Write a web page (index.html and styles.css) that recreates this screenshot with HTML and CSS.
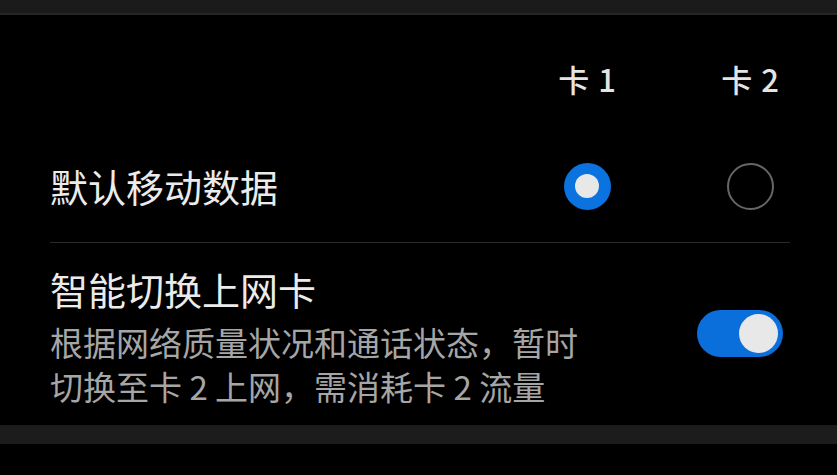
FILE: index.html
```html
<!DOCTYPE html>
<html lang="zh-CN">
  <head>
    <meta charset="utf-8">
    <title>双卡管理</title>
    <link rel="stylesheet" href="styles.css">
  </head>
  <body>
    <div class="topbar"></div>

    <div class="card">
      <div class="row head">
        <span></span>
        <span class="col">卡 1</span>
        <span class="col">卡 2</span>
      </div>

      <div class="row data">
        <span class="title">默认移动数据</span>
        <span class="col"><span class="radio on"></span></span>
        <span class="col"><span class="radio"></span></span>
      </div>

      <div class="switch-row">
        <div class="text">
          <div class="title">智能切换上网卡</div>
          <div class="summary">根据网络质量状况和通话状态，暂时切换至卡 2 上网，需消耗卡 2 流量</div>
        </div>
        <span class="toggle on"><span class="knob"></span></span>
      </div>
    </div>

    <div class="gap"></div>
  </body>
</html>
```

FILE: styles.css
```css
* {
  box-sizing: border-box;
}
body {
  margin: 0;
  background-color: #000;
  font-family: "Noto Sans CJK SC", "Noto Sans", sans-serif;
  color: #e8e8e8;
}
.topbar {
  height: 15px;
  background-color: #1b1b1b;
  border-bottom: 2px solid #262626;
}
.card {
  padding: 0 47px 0 50px;
}
.row {
  display: grid;
  grid-template-columns: 1fr 80px 80px;
  column-gap: 83px;
  align-items: center;
}
.col {
  display: flex;
  justify-content: center;
}
.head {
  padding: 44px 0 31px;
  font-size: 31px;
  line-height: 40px;
  font-weight: 500;
  word-spacing: 2px;
  color: #e4e4e4;
}
.data {
  height: 113px;
  border-bottom: 1px solid #2a2a2a;
}
.title {
  font-size: 38px;
  line-height: 46px;
  color: #ebebeb;
}
.radio {
  width: 47px;
  height: 47px;
  border-radius: 50%;
  border: 2px solid #666;
}
.radio.on {
  border: none;
  background-color: #0b73e0;
  display: flex;
  align-items: center;
  justify-content: center;
}
.radio.on::after {
  content: "";
  width: 24px;
  height: 24px;
  border-radius: 50%;
  background-color: #e8e8e8;
}
.switch-row {
  display: flex;
  align-items: center;
  justify-content: space-between;
  padding: 23px 7px 17px 0;
}
.summary {
  max-width: 540px;
  margin-top: 8px;
  font-size: 33px;
  line-height: 44px;
  color: #a6a6a6;
}
.toggle {
  width: 86px;
  height: 47px;
  border-radius: 24px;
  background-color: #0b6fdb;
  display: flex;
  align-items: center;
  justify-content: flex-end;
  padding-right: 5px;
  margin-bottom: 8px;
}
.knob {
  width: 39px;
  height: 39px;
  border-radius: 50%;
  background-color: #e8e8e8;
}
.gap {
  height: 19px;
  background-color: #1c1c1c;
}
```
